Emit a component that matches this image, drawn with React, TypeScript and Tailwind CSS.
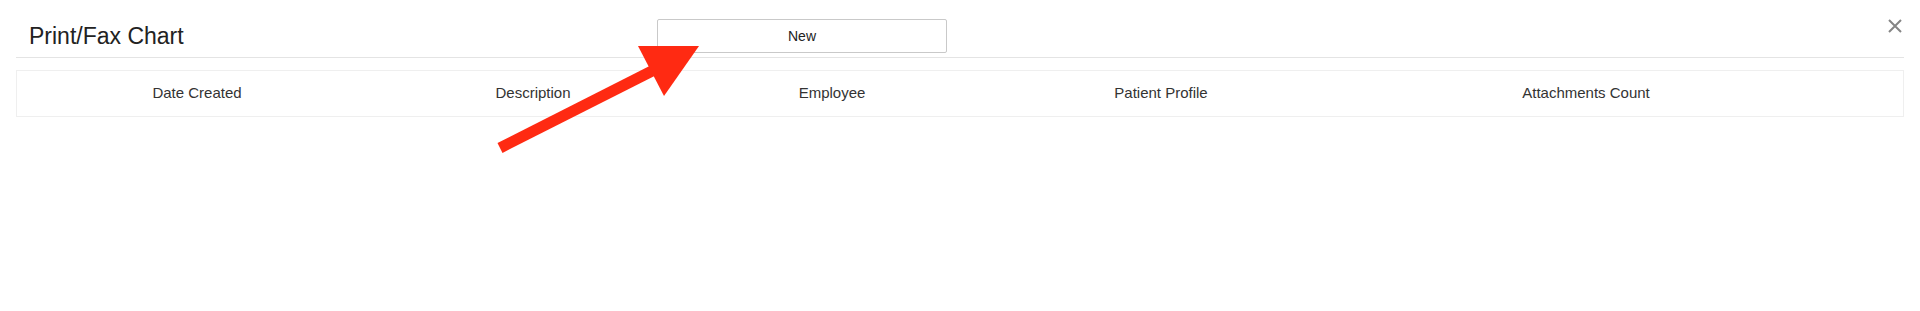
const columns = ['Date Created', 'Description', 'Employee', 'Patient Profile', 'Attachments Count', '']

function PointerArrow() {
  return (
    <svg className="pointer-events-none absolute left-0 top-0" width="1920" height="311" aria-hidden>
      <line x1="500" y1="148" x2="654" y2="70" stroke="#ff2a12" strokeWidth="11" />
      <polygon points="699,46 638,46 664,96" fill="#ff2a12" />
    </svg>
  )
}

export default function App() {
  return (
    <div className="relative h-[311px] w-[1920px] bg-white px-4 font-['Liberation_Sans',Arial,sans-serif] text-[#222]">
      <header className="flex h-[58px] border-b border-[#e4e4e4]">
        <div className="w-[641px] shrink-0 pl-[13px] pt-[25px]">
          <h1 className="text-[23px] leading-none">Print/Fax Chart</h1>
        </div>
        <div className="pt-[19px]">
          <button
            type="button"
            className="flex h-[34px] w-[290px] items-center justify-center rounded-[2px] border border-[#c9c9c9] bg-white text-[14px]"
          >
            New
          </button>
        </div>
        <div className="flex-1" />
        <button type="button" className="mt-[19px] mr-[2px] self-start" aria-label="Close">
          <svg width="14" height="14" viewBox="0 0 14 14" aria-hidden>
            <path d="M1 1 L13 13 M13 1 L1 13" stroke="#858585" strokeWidth="2" />
          </svg>
        </button>
      </header>

      <div className="mt-[12px] grid h-[47px] grid-cols-[360px_312px_286px_372px_478px_1fr] items-center border border-[#efefef] text-[15px] text-[#333]">
        {columns.map((col, i) => (
          <div key={i} className="text-center">
            {col}
          </div>
        ))}
      </div>

      <PointerArrow />
    </div>
  )
}
